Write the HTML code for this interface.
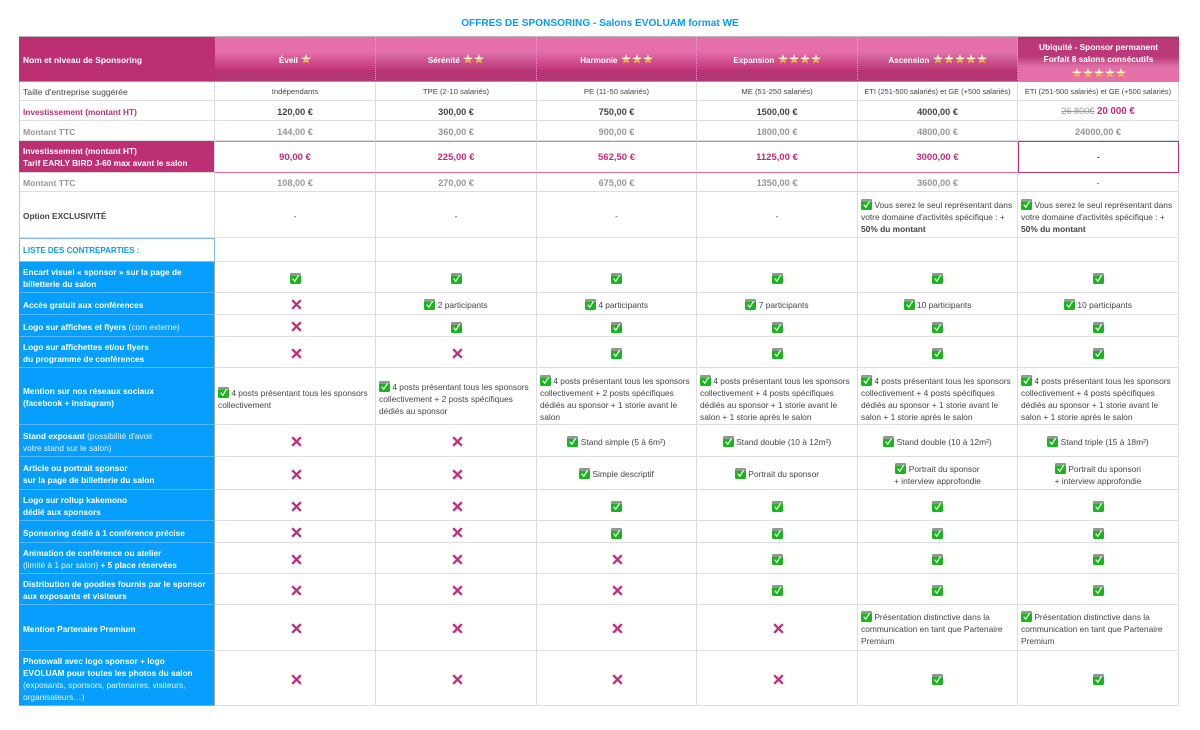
<!DOCTYPE html>
<html lang="fr"><head><meta charset="utf-8"><title>Offres de sponsoring</title>
<style>
html,body{margin:0;padding:0;background:#fff;width:1200px;height:730px;overflow:hidden}
body{font-family:"Liberation Sans",sans-serif;color:#444;position:relative}
h1{position:absolute;left:0;top:17px;width:1200px;margin:0;text-align:center;font-size:10.1px;line-height:14px;color:#0a9bf0;font-weight:bold;filter:blur(.2px)}
table{position:absolute;left:19px;top:36px;width:1160px;table-layout:fixed;border-collapse:separate;border-spacing:0;font-size:8.4px;line-height:12px;filter:blur(.25px)}
td{padding:2px 0 0;border-right:1px solid #ddd;border-bottom:1px solid #ddd;text-align:center;vertical-align:middle;white-space:nowrap;box-sizing:border-box;overflow:hidden}
td:first-child{text-align:left;padding:2px 0 0 3px;font-weight:bold;font-size:8.3px;border-left:1px solid #ccc}
tr.h td{height:46px;color:#fff;font-weight:bold;font-size:8.1px;border:0;border-top:1px solid #bbb;border-bottom:1px solid #999;border-right:1px dotted #e9a9c9;padding-top:2px;position:relative;z-index:0;
background:linear-gradient(#e46fa9 0,#e46fa9 30%,#bc2f73 74%,#bc2f73 100%)}
tr.h td::before{content:"";position:absolute;left:0;right:0;top:14px;height:19px;z-index:-1;background:conic-gradient(rgba(255,255,255,.08) 25%,transparent 0 50%,rgba(255,255,255,.08) 0 75%,transparent 0) 0 0/2px 2px}
tr.h td::after{content:"";position:absolute;left:0;right:0;bottom:0;height:10px;z-index:-1;opacity:.65;background:radial-gradient(circle at 1px 1px,#6a7a6c .6px,transparent .8px) 0 0/3px 3px}
tr.h td:first-child{background:#bc2f73;border-left:0;border-right:0;font-size:8.45px;padding:2px 0 0 4px}
tr.h td:first-child::before,tr.h td:first-child::after,tr.h td.u::after{display:none}
tr.h td.u{background:linear-gradient(#bc2f73 0,#bc2f73 45%,#e46fa9 70%,#e46fa9 100%);border-right:0;font-size:8.3px;padding-top:0}
tr.h td.u::before{top:2px;height:28px}
tr.h td.u svg{position:relative;top:3px}
td:first-child.v{background:#bc2f73;color:#fff;border-bottom:1px solid #d8d8d8;border-left:0;padding:1px 0 0 4px}
td.ml{color:#bc2f73}
td.g{color:#969696;font-weight:bold;font-size:9.2px}
td:first-child.g{font-size:8.6px}
td.n{font-weight:bold;font-size:9.2px;color:#444}
td.p{color:#c52a78;font-weight:bold}
td.pk{border-top:1px solid #e07aac;border-bottom:1px solid #e4669f;font-size:9.5px}
td.bx{border:1px solid #bc2f73}
td.l{text-align:left;padding:5px 0 0 3px}
td.l4{padding-top:4px}
td.l2{padding-top:2px}
td.c4{padding-top:4px}
td:first-child.t{color:#0a9bf0;font-size:8px;border:1px solid #7fbce8;padding-top:2px}
td:first-child.bl{background:#069ffe;color:#fff;border-left:0;padding-left:4px;border-right:1px solid #9aa9b5;border-bottom:1px solid #55baff}
td.bl span{font-weight:normal;color:#e3f4ff}
td:first-child.w{font-weight:normal;font-size:8.6px}
td.s{font-size:7.7px}
td.s2{font-size:7.45px}
s{color:#999;font-weight:normal;font-size:9.2px}
.m{font-size:9.7px;color:#c52a78}
svg{display:inline-block;vertical-align:-2px}
svg.c{width:11px;height:11px}
svg.o{position:relative;top:1px}
svg.x{width:11px;height:11px;position:relative;top:.5px;left:1px}
svg.st{width:10px;height:10px;vertical-align:-1px;margin-left:1px}
</style></head><body>
<svg width="0" height="0" style="position:absolute"><defs>
<symbol id="c" viewBox="0 0 11 11"><rect width="11" height="11" rx="1.8" fill="#18b51c"/><path d="M0 3V1.8A1.8 1.8 0 0 1 1.8 0H9.200A1.800 1.800 0 0 1 11 1.800V3Z" fill="#8f9a8f"/><path d="M2.700 5.600L4.800 8.200L8.600 2.300" fill="none" stroke="#fff" stroke-width="1.200"/></symbol>
<symbol id="x" viewBox="0 0 11 11"><path d="M1.200 1.200L9.800 9.800M9.800 1.200L1.200 9.800" fill="none" stroke="#c0307a" stroke-width="2.400"/></symbol>
<symbol id="st" viewBox="0 0 10 10"><path d="M5 .3L6.300 3.600L9.800 3.800L7.100 6L8 9.500L5 7.600L2 9.500L2.900 6L.2 3.800L3.700 3.600Z" fill="#f1b93f"/><path d="M5 .3L6.300 3.600L9.800 3.800L8.400 5H1.600L.2 3.800L3.700 3.600Z" fill="#fff3d8"/></symbol>
</defs></svg>
<h1>OFFRES DE SPONSORING - Salons EVOLUAM format WE</h1>
<table>
<colgroup><col style="width:196px"><col style="width:161px"><col style="width:161px"><col style="width:160px"><col style="width:161px"><col style="width:160px"><col style="width:161px"></colgroup>
<tr class="h"><td>Nom et niveau de Sponsoring</td><td>Éveil <svg class="st"><use href="#st"/></svg></td><td>Sérénité <svg class="st"><use href="#st"/></svg><svg class="st"><use href="#st"/></svg></td><td>Harmonie <svg class="st"><use href="#st"/></svg><svg class="st"><use href="#st"/></svg><svg class="st"><use href="#st"/></svg></td><td>Expansion <svg class="st"><use href="#st"/></svg><svg class="st"><use href="#st"/></svg><svg class="st"><use href="#st"/></svg><svg class="st"><use href="#st"/></svg></td><td>Ascension <svg class="st"><use href="#st"/></svg><svg class="st"><use href="#st"/></svg><svg class="st"><use href="#st"/></svg><svg class="st"><use href="#st"/></svg><svg class="st"><use href="#st"/></svg></td><td class="u">Ubiquité - Sponsor permanent<br>Forfait 8 salons consécutifs<br><svg class="st"><use href="#st"/></svg><svg class="st"><use href="#st"/></svg><svg class="st"><use href="#st"/></svg><svg class="st"><use href="#st"/></svg><svg class="st"><use href="#st"/></svg></td></tr>
<tr style="height:19px"><td class="w">Taille d'entreprise suggérée</td><td class="s">Indépendants</td><td class="s">TPE (2-10 salariés)</td><td class="s">PE (11-50 salariés)</td><td class="s">ME (51-250 salariés)</td><td class="s2">ETI (251-500 salariés) et GE (+500 salariés)</td><td class="s2">ETI (251-500 salariés) et GE (+500 salariés)</td></tr>
<tr style="height:20px"><td class="ml">Investissement (montant HT)</td><td class="n">120,00 €</td><td class="n">300,00 €</td><td class="n">750,00 €</td><td class="n">1500,00 €</td><td class="n">4000,00 €</td><td class="n"><s>26 800€</s> <span class="m">20 000 €</span></td></tr>
<tr style="height:20px"><td class="g">Montant TTC</td><td class="g">144,00 €</td><td class="g">360,00 €</td><td class="g">900,00 €</td><td class="g">1800,00 €</td><td class="g">4800,00 €</td><td class="g">24000,00 €</td></tr>
<tr style="height:32px"><td class="v">Investissement (montant HT)<br>Tarif EARLY BIRD J-60 max avant le salon</td><td class="p pk">90,00 €</td><td class="p pk">225,00 €</td><td class="p pk">562,50 €</td><td class="p pk">1125,00 €</td><td class="p pk">3000,00 €</td><td class="p pk bx">-</td></tr>
<tr style="height:19px"><td class="g">Montant TTC</td><td class="g">108,00 €</td><td class="g">270,00 €</td><td class="g">675,00 €</td><td class="g">1350,00 €</td><td class="g">3600,00 €</td><td class="g">-</td></tr>
<tr style="height:46px"><td>Option EXCLUSIVITÉ</td><td>-</td><td>-</td><td>-</td><td>-</td><td class="l l4"><svg class="c"><use href="#c"/></svg> Vous serez le seul représentant dans<br>votre domaine d'activités spécifique : +<br><b>50% du montant</b></td><td class="l l4"><svg class="c"><use href="#c"/></svg> Vous serez le seul représentant dans<br>votre domaine d'activités spécifique : +<br><b>50% du montant</b></td></tr>
<tr style="height:24px"><td class="t">LISTE DES CONTREPARTIES :</td><td></td><td></td><td></td><td></td><td></td><td></td></tr>
<tr style="height:31px"><td class="bl">Encart visuel « sponsor » sur la page de<br>billetterie du salon</td><td><svg class="c o"><use href="#c"/></svg></td><td><svg class="c o"><use href="#c"/></svg></td><td><svg class="c o"><use href="#c"/></svg></td><td><svg class="c o"><use href="#c"/></svg></td><td><svg class="c o"><use href="#c"/></svg></td><td><svg class="c o"><use href="#c"/></svg></td></tr>
<tr style="height:22px"><td class="bl">Accès gratuit aux conférences</td><td><svg class="x"><use href="#x"/></svg></td><td><svg class="c"><use href="#c"/></svg> 2 participants</td><td><svg class="c"><use href="#c"/></svg> 4 participants</td><td><svg class="c"><use href="#c"/></svg> 7 participants</td><td><svg class="c"><use href="#c"/></svg> 10 participants</td><td><svg class="c"><use href="#c"/></svg> 10 participants</td></tr>
<tr style="height:22px"><td class="bl">Logo sur affiches et flyers <span>(com externe)</span></td><td><svg class="x"><use href="#x"/></svg></td><td><svg class="c o"><use href="#c"/></svg></td><td><svg class="c o"><use href="#c"/></svg></td><td><svg class="c o"><use href="#c"/></svg></td><td><svg class="c o"><use href="#c"/></svg></td><td><svg class="c o"><use href="#c"/></svg></td></tr>
<tr style="height:31px"><td class="bl">Logo sur affichettes et/ou flyers<br>du programme de conférences</td><td><svg class="x"><use href="#x"/></svg></td><td><svg class="x"><use href="#x"/></svg></td><td><svg class="c o"><use href="#c"/></svg></td><td><svg class="c o"><use href="#c"/></svg></td><td><svg class="c o"><use href="#c"/></svg></td><td><svg class="c o"><use href="#c"/></svg></td></tr>
<tr style="height:57px"><td class="bl">Mention sur nos réseaux sociaux<br>(facebook + instagram)</td><td class="l"><svg class="c"><use href="#c"/></svg> 4 posts présentant tous les sponsors<br>collectivement</td><td class="l"><svg class="c"><use href="#c"/></svg> 4 posts présentant tous les sponsors<br>collectivement + 2 posts spécifiques<br>dédiés au sponsor</td><td class="l"><svg class="c"><use href="#c"/></svg> 4 posts présentant tous les sponsors<br>collectivement + 2 posts spécifiques<br>dédiés au sponsor + 1 storie avant le<br>salon</td><td class="l"><svg class="c"><use href="#c"/></svg> 4 posts présentant tous les sponsors<br>collectivement + 4 posts spécifiques<br>dédiés au sponsor + 1 storie avant le<br>salon + 1 storie après le salon</td><td class="l"><svg class="c"><use href="#c"/></svg> 4 posts présentant tous les sponsors<br>collectivement + 4 posts spécifiques<br>dédiés au sponsor + 1 storie avant le<br>salon + 1 storie après le salon</td><td class="l"><svg class="c"><use href="#c"/></svg> 4 posts présentant tous les sponsors<br>collectivement + 4 posts spécifiques<br>dédiés au sponsor + 1 storie avant le<br>salon + 1 storie après le salon</td></tr>
<tr style="height:32px"><td class="bl">Stand exposant <span>(possibilité d'avoir<br>votre stand sur le salon)</span></td><td><svg class="x"><use href="#x"/></svg></td><td><svg class="x"><use href="#x"/></svg></td><td><svg class="c"><use href="#c"/></svg> Stand simple (5 à 6m²)</td><td><svg class="c"><use href="#c"/></svg> Stand double (10 à 12m²)</td><td><svg class="c"><use href="#c"/></svg> Stand double (10 à 12m²)</td><td><svg class="c"><use href="#c"/></svg> Stand triple (15 à 18m²)</td></tr>
<tr style="height:33px"><td class="bl">Article ou portrait sponsor<br>sur la page de billetterie du salon</td><td><svg class="x"><use href="#x"/></svg></td><td><svg class="x"><use href="#x"/></svg></td><td><svg class="c"><use href="#c"/></svg> Simple descriptif</td><td><svg class="c"><use href="#c"/></svg> Portrait du sponsor</td><td class="c4"><svg class="c"><use href="#c"/></svg> Portrait du sponsor<br>+ interview approfondie</td><td class="c4"><svg class="c"><use href="#c"/></svg> Portrait du sponsori<br>+ interview approfondie</td></tr>
<tr style="height:31px"><td class="bl">Logo sur rollup kakemono<br>dédié aux sponsors</td><td><svg class="x"><use href="#x"/></svg></td><td><svg class="x"><use href="#x"/></svg></td><td><svg class="c o"><use href="#c"/></svg></td><td><svg class="c o"><use href="#c"/></svg></td><td><svg class="c o"><use href="#c"/></svg></td><td><svg class="c o"><use href="#c"/></svg></td></tr>
<tr style="height:22px"><td class="bl">Sponsoring dédié à 1 conférence précise</td><td><svg class="x"><use href="#x"/></svg></td><td><svg class="x"><use href="#x"/></svg></td><td><svg class="c o"><use href="#c"/></svg></td><td><svg class="c o"><use href="#c"/></svg></td><td><svg class="c o"><use href="#c"/></svg></td><td><svg class="c o"><use href="#c"/></svg></td></tr>
<tr style="height:31px"><td class="bl">Animation de conférence ou atelier<br><span>(limité à 1 par salon)</span> + 5 place réservées</td><td><svg class="x"><use href="#x"/></svg></td><td><svg class="x"><use href="#x"/></svg></td><td><svg class="x"><use href="#x"/></svg></td><td><svg class="c o"><use href="#c"/></svg></td><td><svg class="c o"><use href="#c"/></svg></td><td><svg class="c o"><use href="#c"/></svg></td></tr>
<tr style="height:31px"><td class="bl">Distribution de goodies fournis par le sponsor<br>aux exposants et visiteurs</td><td><svg class="x"><use href="#x"/></svg></td><td><svg class="x"><use href="#x"/></svg></td><td><svg class="x"><use href="#x"/></svg></td><td><svg class="c o"><use href="#c"/></svg></td><td><svg class="c o"><use href="#c"/></svg></td><td><svg class="c o"><use href="#c"/></svg></td></tr>
<tr style="height:46px"><td class="bl">Mention Partenaire Premium</td><td><svg class="x"><use href="#x"/></svg></td><td><svg class="x"><use href="#x"/></svg></td><td><svg class="x"><use href="#x"/></svg></td><td><svg class="x"><use href="#x"/></svg></td><td class="l l2"><svg class="c"><use href="#c"/></svg> Présentation distinctive dans la<br>communication en tant que Partenaire<br>Premium</td><td class="l l2"><svg class="c"><use href="#c"/></svg> Présentation distinctive dans la<br>communication en tant que Partenaire<br>Premium</td></tr>
<tr style="height:55px"><td class="bl">Photowall avec logo sponsor + logo<br>EVOLUAM pour toutes les photos du salon<br><span>(exposants, sponsors, partenaires, visiteurs,<br>organisateurs…)</span></td><td><svg class="x"><use href="#x"/></svg></td><td><svg class="x"><use href="#x"/></svg></td><td><svg class="x"><use href="#x"/></svg></td><td><svg class="x"><use href="#x"/></svg></td><td><svg class="c o"><use href="#c"/></svg></td><td><svg class="c o"><use href="#c"/></svg></td></tr>
</table>
</body></html>
